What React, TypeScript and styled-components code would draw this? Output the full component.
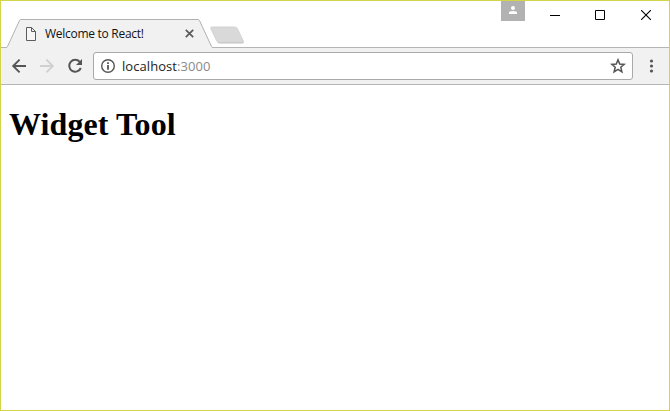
import React from "react";
import styled, { createGlobalStyle } from "styled-components";

const GlobalStyle = createGlobalStyle`
  * { box-sizing: border-box; }
  html, body { margin: 0; padding: 0; overflow: hidden; }
  svg { display: block; flex: none; }
`;

const Window = styled.div`
  display: flex;
  flex-direction: column;
  width: 670px;
  height: 411px;
  border: 1px solid #d2d44c;
  background: #fff;
  font-family: "Open Sans", "Noto Sans", sans-serif;
`;

const TitleBar = styled.header`
  display: flex;
  flex: none;
  height: 47px;
  background: linear-gradient(#b4b4b4, #b4b4b4) bottom / 100% 1px no-repeat;
`;

const Tab = styled.div`
  position: relative;
  display: flex;
  align-items: center;
  width: 207px;
  height: 29px;
  margin: 18px 0 0 5px;
  padding: 0 19px 0 20px;
`;

const TabShape = styled.svg`
  position: absolute;
  inset: 0;
`;

const TabTitle = styled.span`
  position: relative;
  flex: 1;
  margin-left: 9px;
  color: #111;
  font-size: 12px;
  line-height: 16px;
  letter-spacing: -0.28px;
  white-space: nowrap;
`;

const TabIcon = styled.svg`
  position: relative;
`;

const NewTab = styled.svg`
  margin: 24px 0 0 -4px;
`;

const Controls = styled.div`
  display: flex;
  align-items: flex-start;
  margin-left: auto;
`;

const Profile = styled.div`
  display: flex;
  justify-content: center;
  width: 24px;
  height: 20px;
  padding-top: 5px;
  margin-right: 7px;
  background: #b2b2b2;
`;

const Control = styled.div<{ $width?: number }>`
  display: flex;
  align-items: center;
  justify-content: center;
  width: ${({ $width = 46 }) => $width}px;
  height: 28px;
`;

const Toolbar = styled.nav`
  display: flex;
  align-items: center;
  flex: none;
  height: 37px;
  padding: 0 9px 1px;
  background: #f1f1f1;
  border-bottom: 1px solid #b6b6b6;
`;

const NavButton = styled.div`
  width: 18px;
  height: 18px;
  margin-right: 10px;
`;

const AddressBar = styled.div`
  display: flex;
  align-items: center;
  width: 540px;
  height: 28px;
  margin: 0 9px 0 -1px;
  padding: 0 6px;
  background: #fff;
  border: 1px solid #a9a9a9;
  border-radius: 3px;
`;

const Address = styled.span`
  flex: 1;
  margin-left: 6px;
  color: #222;
  font-size: 13px;
  line-height: 18px;
  letter-spacing: 0.06px;
`;

const Port = styled.span`
  color: #8a8a8a;
`;

const Page = styled.main`
  flex: 1;
  padding: 0 8px;
`;

const Heading = styled.h1`
  margin: 21px 0 0;
  color: #000;
  font: bold 32px/37px "Liberation Serif", serif;
  letter-spacing: 0.1px;
`;

export default function App() {
  return (
    <>
      <GlobalStyle />
      <Window>
        <TitleBar>
          <Tab>
            <TabShape width="207" height="29" viewBox="0 0 207 29">
              <path d="M0 29V28.5H1L13.5 1.5Q14 .5 15 .5H192Q193 .5 193.5 1.5L206 28.5H207V29Z" fill="#f1f1f1" />
              <path d="M0 28.5Q1 28.5 1.5 27.5L13.5 1.5Q14 .5 15 .5H192Q193 .5 193.5 1.5L205.5 27.5Q206 28.5 207 28.5" fill="none" stroke="#b1b1b1" />
            </TabShape>
            <TabIcon width="10" height="14" viewBox="0 0 10 14">
              <path d="M.5.5H5.5L9.5 4.5V13.5H.5ZM5.5.5V4.5H9.5" fill="#f6f6f6" stroke="#5d5d5d" />
            </TabIcon>
            <TabTitle>Welcome to React!</TabTitle>
            <TabIcon width="9" height="9" viewBox="0 0 9 9">
              <path d="M.8.8L8.2 8.2M8.2.8L.8 8.2" stroke="#5a5a5a" strokeWidth="1.7" />
            </TabIcon>
          </Tab>
          <NewTab width="36" height="19" viewBox="0 0 36 19">
            <path d="M3 2H25.5Q27.5 2 28.3 3.5L34.2 15.8Q35 17.5 33 17.5H10.5Q8.5 17.5 7.7 15.8L1.8 3.5Q1 2 3 2Z" fill="#d9d9d9" stroke="#d2d2d2" />
            <path d="M8.5 17.2Q9 18 10.5 18H33Q34.5 18 34.6 17" fill="none" stroke="#c3c3c3" />
          </NewTab>
          <Controls>
            <Profile>
              <svg width="8" height="8" viewBox="0 0 8 8" fill="#fff">
                <circle cx="4" cy="2" r="2" />
                <path d="M0 8V6.5Q0 5 4 5T8 6.5V8Z" />
              </svg>
            </Profile>
            <Control>
              <svg width="10" height="10" viewBox="0 0 10 10"><path d="M0 5.5H10" stroke="#000" /></svg>
            </Control>
            <Control $width={45}>
              <svg width="11" height="10" viewBox="0 0 11 10"><path d="M.5.5H9.5V9.5H.5Z" fill="none" stroke="#000" /></svg>
            </Control>
            <Control>
              <svg width="10" height="10" viewBox="0 0 10 10"><path d="M0 0L10 10M10 0L0 10" stroke="#000" strokeWidth="1.1" /></svg>
            </Control>
          </Controls>
        </TitleBar>
        <Toolbar>
          <NavButton>
            <svg width="18" height="18" viewBox="0 0 18 18"><path d="M16 9H3.5M9.6 2.6L3.2 9L9.6 15.4" fill="none" stroke="#555" strokeWidth="1.9" /></svg>
          </NavButton>
          <NavButton>
            <svg width="18" height="18" viewBox="0 0 18 18"><path d="M2 9H14.5M8.4 2.6L14.8 9L8.4 15.4" fill="none" stroke="#d0d0d0" strokeWidth="1.9" /></svg>
          </NavButton>
          <NavButton>
            <svg width="18" height="18" viewBox="0 0 18 18">
              <path d="M13.8 4.8A6 6 0 1 0 14.8 11" fill="none" stroke="#555" strokeWidth="2" />
              <path d="M16 2V8H10Z" fill="#555" />
            </svg>
          </NavButton>
          <AddressBar>
            <svg width="16" height="16" viewBox="0 0 16 16">
              <circle cx="8" cy="8" r="6.3" fill="none" stroke="#555" strokeWidth="1.4" />
              <path d="M7.1 4.3H8.9V6H7.1ZM7.1 7.1H8.9V11.7H7.1Z" fill="#555" />
            </svg>
            <Address>localhost<Port>:3000</Port></Address>
            <svg width="16" height="16" viewBox="0 0 16 16">
              <path d="M8 1.8L9.7 6L14.2 6.4L10.8 9.3L11.9 13.8L8 11.4L4.1 13.8L5.2 9.3L1.8 6.4L6.3 6Z" fill="none" stroke="#555" strokeWidth="1.5" />
            </svg>
          </AddressBar>
          <svg width="18" height="18" viewBox="0 0 18 18" fill="#555">
            <circle cx="9.5" cy="4" r="1.6" />
            <circle cx="9.5" cy="9" r="1.6" />
            <circle cx="9.5" cy="14" r="1.6" />
          </svg>
        </Toolbar>
        <Page>
          <Heading>Widget Tool</Heading>
        </Page>
      </Window>
    </>
  );
}
